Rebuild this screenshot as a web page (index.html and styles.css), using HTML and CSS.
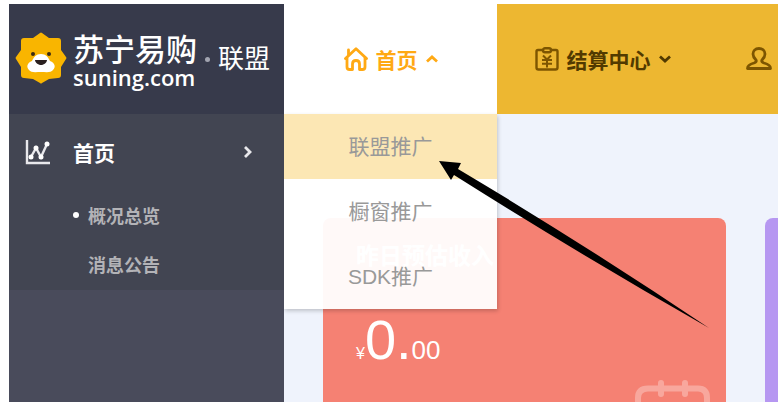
FILE: index.html
```
<!DOCTYPE html>
<html lang="zh-CN">

<head>
  <meta charset="UTF-8" />
  <meta name="viewport" content="width=device-width, initial-scale=1.0" />
  <title>苏宁易购联盟</title>
  <link rel="stylesheet" href="styles.css">
</head>

<body>
  <aside class="sidebar">
    <a href="#" class="logo">
      <svg class="lion" viewBox="0 0 52 54" width="52" height="54" aria-hidden="true">
        <path d="M27 1L34 6L43 6Q46 6 46 9L46 18L51 25Q52 26 51 27L46 35L46 43Q46 46 43 46L34 47L27 51Q26 52 25 51L18 47L9 46Q6 46 6 43L6 35L1 27Q0 26 1 25L6 18L6 9Q6 6 9 6L18 6L25 1Q26 0 27 1Z" fill="#f9b500" />
        <circle cx="18" cy="22" r="2" fill="#3a2a14" />
        <circle cx="34" cy="22" r="2" fill="#3a2a14" />
        <path d="M26 22C31 22 33 25 35 29C40 31 41 35 38 38C36 41 31 40 26 40C21 40 16 41 14 38C11 35 12 31 17 29C19 25 21 22 26 22Z" fill="#fff" />
        <path d="M20 28H32C32 31 28 33 26 33C24 33 20 31 20 28Z" fill="#2a2020" />
      </svg>
      <span class="brand">
        <span class="brand-cn">苏宁易购</span>
        <span class="brand-en">suning.com</span>
      </span>
      <span class="brand-dot"></span>
      <span class="brand-sub">联盟</span>
    </a>

    <nav class="side-menu">
      <a href="#" class="side-title">
        <svg viewBox="0 0 26 26" width="26" height="26" fill="none" stroke="#e8e8ec" aria-hidden="true">
          <path d="M2 1V24H25" stroke-width="2.400" />
          <path d="M6 18L11 9L16 18L22 5" stroke-width="2.400" />
          <g fill="#fff" stroke="none">
            <circle cx="6" cy="18" r="2.500" />
            <circle cx="11" cy="9" r="2.500" />
            <circle cx="16" cy="18" r="2.500" />
            <circle cx="22" cy="5" r="2.500" />
          </g>
        </svg>
        <span>首页</span>
        <svg class="side-arrow" viewBox="0 0 8 12" width="8" height="12" fill="none" stroke="#e8e8ec" stroke-width="2.800" aria-hidden="true">
          <path d="M1 1L6 6L1 11" />
        </svg>
      </a>
      <ul>
        <li class="current"><a href="#">概况总览</a></li>
        <li><a href="#">消息公告</a></li>
      </ul>
    </nav>
  </aside>

  <div class="main">
    <nav class="topbar">
      <div class="nav-item active">
        <a href="#" class="nav-link">
          <svg viewBox="0 0 24 24" width="24" height="24" fill="none" stroke="currentColor" stroke-width="2.800" stroke-linejoin="round" stroke-linecap="round" aria-hidden="true">
            <path d="M1.500 11.500L12 1.800L22.500 11.500" />
            <path d="M3 11V20Q3 22.500 5.500 22.500H8.500V17Q8.500 13.500 12 13.500Q15.500 13.500 15.500 17V22.500H18.500Q21 22.500 21 20V11" />
            <path d="M4.500 8V3" />
          </svg>
          <span>首页</span>
          <svg viewBox="0 0 12 8" width="12" height="8" fill="none" stroke="currentColor" stroke-width="2.800" aria-hidden="true">
            <path d="M1 6.500L6 2L11 6.500" />
          </svg>
        </a>
        <ul class="dropdown">
          <li><a href="#" class="selected">联盟推广</a></li>
          <li><a href="#">橱窗推广</a></li>
          <li><a href="#">SDK推广</a></li>
        </ul>
      </div>
      <div class="nav-item nav-settle">
        <a href="#" class="nav-link">
          <svg class="nav-icon" viewBox="0 0 24 24" width="24" height="24" fill="none" stroke="currentColor" stroke-width="2.400" aria-hidden="true">
            <path d="M8 3H3Q1.500 3 1.500 4.500V20.500Q1.500 22.500 3.500 22.500H20.500Q22.500 22.500 22.500 20.500V4.500Q22.500 3 21 3H16" />
            <rect x="8" y="1.200" width="8" height="4" rx="2" />
            <path d="M8 8.500L12 12.500L16 8.500M7 13H17M7 16.800H17M12 12.500V20.500" stroke-width="2" />
          </svg>
          <span>结算中心</span>
          <svg viewBox="0 0 12 8" width="12" height="8" fill="none" stroke="currentColor" stroke-width="2.800" aria-hidden="true">
            <path d="M1 1.500L6 6L11 1.500" />
          </svg>
        </a>
      </div>
      <div class="nav-item nav-user">
        <a href="#" class="nav-link" aria-label="账户">
          <svg class="nav-icon" viewBox="0 0 26 24" width="26" height="24" fill="none" stroke="currentColor" stroke-width="2.800" stroke-linejoin="round" aria-hidden="true">
            <path d="M10 13C8 11 7 9 7 7C7 4 9 1.500 13 1.500C17 1.500 19 4 19 7C19 9 18 11 16 13Q15 15 18 16C22 17 24.500 18.500 24.500 21.500H1.500C1.500 18.500 4 17 8 16Q11 15 10 13Z" />
          </svg>
        </a>
      </div>
    </nav>

    <section class="cards">
      <article class="card card-red">
        <h2>昨日预估收入</h2>
        <p class="amount"><small>¥</small><strong>0.</strong><span>00</span></p>
        <svg class="card-icon" viewBox="0 0 76 72" width="76" height="72" fill="none" stroke="#fff" stroke-width="6" stroke-linecap="round" aria-hidden="true">
          <path d="M13 8.500H63Q72 8.500 72 18V60Q72 69 63 69H13Q3 69 3 60V18Q3 8.500 13 8.500ZM26 3V14M50 3V14" />
        </svg>
      </article>
      <article class="card card-purple"></article>
    </section>
  </div>

  <!-- arrow pointing at the first dropdown entry -->
  <svg class="pointer" viewBox="0 0 270 168" width="270" height="168" aria-hidden="true">
    <path d="M0 0L22 2L19 8Q145 83 270 167Q140 93 15 14L12 19Z" />
  </svg>
</body>

</html>
```

FILE: styles.css
```
* {
  box-sizing: border-box;
}

body {
  margin: 0;
  padding: 4px 0 0 9px;
  height: 100vh;
  display: flex;
  overflow: hidden;
  position: relative;
  background: #fff;
  font-family: "Liberation Sans", "Noto Sans CJK SC", sans-serif;
}

a {
  color: inherit;
  text-decoration: none;
}

ul {
  list-style: none;
  margin: 0;
  padding: 0;
}

/* Sidebar */
.sidebar {
  flex: 0 0 275px;
  background: #494b5b;
}

.logo {
  display: flex;
  align-items: center;
  height: 110px;
  padding-left: 6px;
  background: #373a4b;
  color: #fff;
}

.lion {
  margin-right: 6px;
}

.brand {
  display: flex;
  flex-direction: column;
}

.brand-cn {
  font-size: 31px;
  font-weight: 500;
  line-height: 36px;
}

.brand-en {
  font-family: "Open Sans", sans-serif;
  font-size: 22px;
  font-weight: 600;
  line-height: 16px;
}

.brand-dot {
  width: 5px;
  height: 5px;
  margin: 0 8px;
  border-radius: 50%;
  background: #a2a4b0;
}

.brand-sub {
  font-size: 26px;
  line-height: 36px;
}

.side-menu {
  padding-bottom: 2px;
  background: #424552;
  color: #b3b3b7;
}

.side-title {
  display: flex;
  align-items: center;
  height: 76px;
  padding: 0 32px 0 16px;
  color: #fff;
  font-size: 21px;
  font-weight: bold;
}

.side-title span {
  margin-left: 22px;
}

.side-arrow {
  margin-left: auto;
}

.side-menu li {
  display: flex;
  align-items: center;
  height: 49px;
  padding-left: 79px;
  font-size: 18px;
  font-weight: bold;
}

.side-menu .current {
  padding-left: 64px;
}

.side-menu .current::before {
  content: "";
  width: 6px;
  height: 6px;
  margin-right: 9px;
  border-radius: 50%;
  background: #fff;
}

/* Main area */
.main {
  flex: 1;
  min-width: 0;
  overflow: hidden;
  background: #eff3fc;
}

.topbar {
  display: flex;
  height: 110px;
  background: #edb731;
  color: #523a00;
  font-size: 21px;
  font-weight: bold;
}

.nav-item {
  position: relative;
  flex: 0 0 211px;
}

.nav-link {
  display: flex;
  align-items: center;
  justify-content: center;
  gap: 8px;
  height: 100%;
}

.nav-icon {
  color: #7d5500;
}

.nav-user {
  flex: 1 0 70px;
}

.nav-user .nav-link {
  justify-content: flex-start;
  padding-left: 38px;
}

.active {
  flex-basis: 213px;
  background: #fff;
  color: #ffa914;
}

.dropdown {
  position: absolute;
  top: 100%;
  left: 0;
  width: 100%;
  z-index: 10;
  background: rgba(255, 255, 255, 0.95);
  box-shadow: 1px 2px 4px rgba(0, 0, 0, 0.2);
  color: #999;
  font-weight: normal;
}

.dropdown a {
  display: block;
  line-height: 65px;
  text-align: center;
}

.dropdown .selected {
  background: #fce7b4;
}

/* Income cards */
.cards {
  display: flex;
  gap: 39px;
  padding: 104px 0 0 39px;
}

.card {
  flex: 0 0 403px;
  display: flex;
  flex-direction: column;
  height: 250px;
  padding: 18px 15px 16px 33px;
  border-radius: 8px;
  color: #fff;
}

.card-red {
  background: #f58173;
}

.card-purple {
  background: #b697f1;
}

.card h2 {
  margin: 0;
  font-size: 23px;
  line-height: 40px;
}

.amount {
  margin: 36px 0 0;
  line-height: 1;
}

.amount small {
  font-size: 16px;
}

.amount strong {
  font-size: 56px;
  font-weight: normal;
}

.amount span {
  font-size: 26px;
}

.card-icon {
  align-self: flex-end;
  flex-shrink: 0;
  margin-top: 12px;
  opacity: 0.3;
}

.pointer {
  position: absolute;
  top: 161px;
  left: 439px;
  z-index: 20;
  pointer-events: none;
}
```
